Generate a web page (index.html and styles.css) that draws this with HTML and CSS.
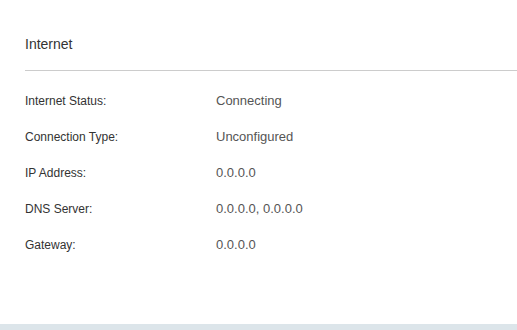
FILE: index.html
```html
<!DOCTYPE html>
<html lang="en">
<head>
    <meta charset="UTF-8">
    <meta name="viewport" content="width=device-width, initial-scale=1.0">
    <title>Internet</title>
    <link rel="stylesheet" href="styles.css">
</head>
<body>

<div class="panel">
    <h2 class="panel-title">Internet</h2>

    <!-- status rows -->
    <div class="info-list">
        <div class="info-row">
            <span class="info-label">Internet Status:</span>
            <span class="info-value">Connecting</span>
        </div>
        <div class="info-row">
            <span class="info-label">Connection Type:</span>
            <span class="info-value">Unconfigured</span>
        </div>
        <div class="info-row">
            <span class="info-label">IP Address:</span>
            <span class="info-value">0.0.0.0</span>
        </div>
        <div class="info-row">
            <span class="info-label">DNS Server:</span>
            <span class="info-value">0.0.0.0, 0.0.0.0</span>
        </div>
        <div class="info-row">
            <span class="info-label">Gateway:</span>
            <span class="info-value">0.0.0.0</span>
        </div>
    </div>
</div>

<div class="footer-band"></div>

</body>
</html>
```

FILE: styles.css
```css
body {
    font-family: 'Liberation Sans', Arial, sans-serif;
    background-color: #fff;
    margin: 0;
    padding: 0;
    color: #333;
}
.panel {
    height: 324px;
    box-sizing: border-box;
    padding-left: 25px;
    padding-top: 36px;
}
.panel-title {
    margin: 0;
    font-size: 14px;
    font-weight: normal;
    line-height: 16px;
    color: #333;
    padding-bottom: 18px;
    border-bottom: 1px solid #ccc;
}
.info-list {
    padding-top: 12px;
}
.info-row {
    display: grid;
    grid-template-columns: 191px 1fr;
    height: 36px;
    line-height: 36px;
}
.info-label {
    font-size: 12px;
    color: #333;
}
.info-value {
    font-size: 13px;
    color: #555;
}
.footer-band {
    height: 6px;
    background-color: #dce5ea;
}
```
